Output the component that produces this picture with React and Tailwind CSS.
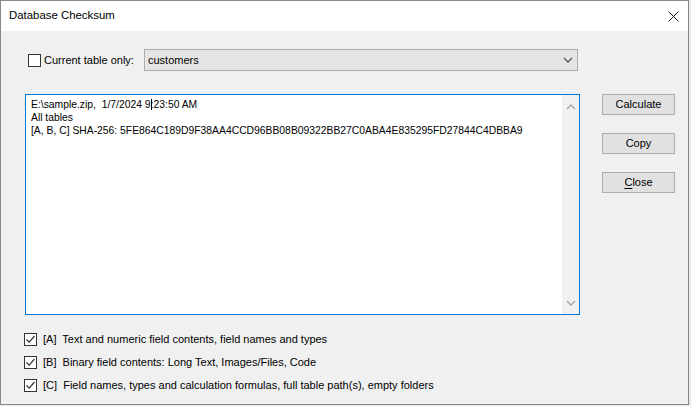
import React from "react";

const ui = { fontFamily: '"Liberation Sans", Arial, sans-serif' };
const mono = { fontFamily: '"Liberation Sans", Arial, sans-serif' };

const CheckMark = () => (
  <svg width="11" height="11" viewBox="0 0 11 11" className="block">
    <path d="M1.5 5.5 L4.2 8.2 L9.5 2" fill="none" stroke="#333" strokeWidth="1.2" />
  </svg>
);

const Box = ({ checked }) => (
  <span className="w-[13px] h-[13px] border border-[#333] bg-white flex items-center justify-center shrink-0">
    {checked && <CheckMark />}
  </span>
);

const Chevron = ({ up, color = "#555" }) => (
  <svg width="10" height="6" viewBox="0 0 10 6" className="block">
    <path
      d={up ? "M1 5 L5 1 L9 5" : "M1 1 L5 5 L9 1"}
      fill="none"
      stroke={color}
      strokeWidth="1.3"
    />
  </svg>
);

const Button = ({ children }) => (
  <button className="w-[73px] h-[21px] bg-[#e1e1e1] border border-[#adadad] text-[11px] text-black flex items-center justify-center leading-none">
    {children}
  </button>
);

const options = [
  "[A]  Text and numeric field contents, field names and types",
  "[B]  Binary field contents: Long Text, Images/Files, Code",
  "[C]  Field names, types and calculation formulas, full table path(s), empty folders",
];

export default function App() {
  return (
    <div className="w-[691px] h-[406px] bg-[#e8e8e8] overflow-hidden" style={ui}>
      <div className="w-[689px] h-[405px] border border-[#8a8a8a] bg-[#f0f0f0] flex flex-col">
        {/* Title bar */}
        <div className="h-[30px] bg-white flex items-center justify-between pl-[8px] pr-[8px] shrink-0">
          <span className="text-[11.4px] text-black">Database Checksum</span>
          <svg width="11" height="11" viewBox="0 0 11 11" className="mr-[1px]">
            <path d="M0.5 0.5 L10.5 10.5 M10.5 0.5 L0.5 10.5" stroke="#111" strokeWidth="1" />
          </svg>
        </div>

        {/* Client area */}
        <div className="pl-[24px] pt-[18px] flex flex-col">
          <div className="flex items-center h-[22px] ml-[3px]">
            <Box />
            <span className="ml-[3px] text-[11px] text-black w-[100px] whitespace-nowrap">Current table only:</span>
            <div className="w-[434px] h-[22px] bg-[#e5e5e5] border border-[#adadad] flex items-center justify-between pl-[3px] pr-[4px]">
              <span className="text-[11px] text-black">customers</span>
              <Chevron />
            </div>
          </div>

          <div className="flex mt-[23px]">
            <div className="w-[555px] h-[221px] border border-[#0078d7] bg-white flex">
              <div className="flex-1 pl-[5px] pt-[3px] text-[10.35px] leading-[13px] text-black" style={mono}>
                <div className="whitespace-pre">
                  {"E:\\sample.zip,  1/7/2024 "}
                  <span className="relative">
                    9
                    <span className="absolute right-[-1px] top-0 h-full w-px bg-black" />
                  </span>
                  {":23:50 AM"}
                </div>
                <div>All tables</div>
                <div className="whitespace-pre">
                  [A, B, C] SHA-256: 5FE864C189D9F38AA4CCD96BB08B09322BB27C0ABA4E835295FD27844C4DBBA9
                </div>
              </div>
              <div className="w-[17px] h-full bg-[#f0f0f0] flex flex-col items-center justify-between pt-[9px] pb-[8px]">
                <Chevron up color="#a3a3a3" />
                <Chevron color="#a3a3a3" />
              </div>
            </div>

            <div className="ml-[22px] flex flex-col gap-[18px]">
              <Button>Calculate</Button>
              <Button>Copy</Button>
              <Button>
                <span className="underline underline-offset-2">C</span>lose
              </Button>
            </div>
          </div>

          <div className="flex flex-col gap-[10px] mt-[18px] -ml-[1px]">
            {options.map((t) => (
              <div key={t} className="flex items-center h-[13px]">
                <Box checked />
                <span className="ml-[6px] text-[11px] text-black whitespace-pre">{t}</span>
              </div>
            ))}
          </div>
        </div>
      </div>
    </div>
  );
}
